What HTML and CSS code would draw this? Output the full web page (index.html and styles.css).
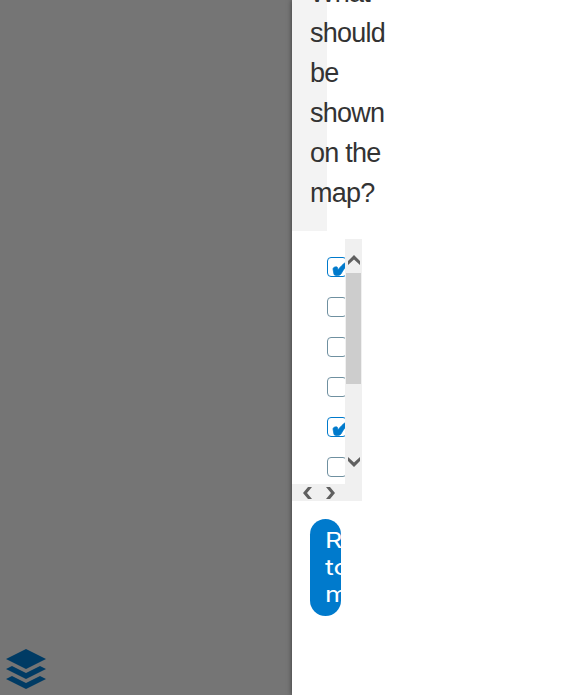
FILE: index.html
```html
<!DOCTYPE html>
<html lang="en">
<head>
<meta charset="utf-8">
<title>Map layers</title>
<link rel="stylesheet" href="styles.css">
</head>
<body>
<div class="screen">
  <div class="backdrop">
    <svg class="layers" width="40" height="40" viewBox="0 0 40 40"><path d="M20 0L40 10L20 20L0 10ZM0 20L6 17L20 24L34 17L40 20L20 30ZM0 30L6 27L20 34L34 27L40 30L20 40Z"/></svg>
  </div>
  <aside class="panel">
    <h2 class="heading">What should be shown on&nbsp;the map?</h2>
    <div class="scroller">
      <div class="options">
        <span class="box checked"><svg class="tick" width="18" height="14" viewBox="0 0 18 14"><path d="M0 6C0 4 4 3 4.500 4.500L5 7C7 4 10 1 13 -1H17C13 3 10 7 8 11C6.500 13 2 13 1 11.500Z"/></svg></span>
        <span class="box"></span>
        <span class="box"></span>
        <span class="box"></span>
        <span class="box checked"><svg class="tick" width="18" height="14" viewBox="0 0 18 14"><path d="M0 6C0 4 4 3 4.500 4.500L5 7C7 4 10 1 13 -1H17C13 3 10 7 8 11C6.500 13 2 13 1 11.500Z"/></svg></span>
        <span class="box"></span>
      </div>
      <div class="vbar">
        <svg class="up" width="12" height="10" viewBox="0 0 12 10"><path d="M0 6L6 0L12 6V10L6 4.500L0 10Z"/></svg>
        <div class="thumb"></div>
        <svg class="down" width="12" height="10" viewBox="0 0 12 10"><path d="M0 0L6 5.500L12 0V4L6 10L0 4Z"/></svg>
      </div>
      <div class="hbar">
        <svg width="10" height="12" viewBox="0 0 10 12"><path d="M5 0H9L4 6L9 12H5L0 6Z"/></svg>
        <svg width="10" height="12" viewBox="0 0 10 12"><path d="M0 0H4L9 6L4 12H0L5 6Z"/></svg>
      </div>
    </div>
    <button class="return"><span class="label">Return to map</span></button>
  </aside>
</div>
</body>
</html>
```
FILE: styles.css
```css
body { margin: 0; background: #fff; }
.screen { display: flex; height: 695px; overflow: hidden; }
.backdrop {
  width: 292px;
  box-sizing: border-box;
  padding: 0 0 6px 6px;
  display: flex;
  align-items: flex-end;
  background: #757575;
}
.layers { fill: #003b64; display: block; }
.panel {
  width: 292px;
  background: #fff;
  box-shadow: 0 0 5px rgba(0, 0, 0, .5);
}
.heading {
  width: 35px;
  height: 276px;
  margin: -45px 0 8px;
  padding: 18px 0 18px 18px;
  box-sizing: border-box;
  background: #f3f3f3;
  color: #333;
  font: 400 27px/40px "Liberation Sans", Arial, sans-serif;
  letter-spacing: -.75px;
}
.scroller {
  width: 70px;
  height: 262px;
  display: grid;
  grid-template: 245px 17px / 53px 17px;
}
.options {
  overflow: hidden;
  padding: 18px 0 0 35px;
  display: flex;
  flex-direction: column;
  gap: 20px;
}
.box {
  width: 20px;
  height: 20px;
  flex: none;
  box-sizing: border-box;
  border: 1px solid #6f90a0;
  border-radius: 4px;
}
.checked { border-color: #007acc; }
.tick { display: block; margin: 5px 0 0 5px; fill: #007acc; stroke: #007acc; stroke-width: .7; overflow: visible; }
.vbar {
  background: #f0f0f0;
  display: flex;
  flex-direction: column;
  align-items: center;
}
.vbar svg, .hbar svg { display: block; fill: #606060; flex: none; }
.vbar .up { margin: 16px 0 8px; }
.thumb { width: 15px; height: 111px; background: #cdcdcd; }
.vbar .down { margin-top: 73px; }
.hbar {
  grid-column: 1 / 3;
  background: #f0f0f0;
  display: flex;
  align-items: center;
  gap: 13px;
  padding-left: 11px;
}
.return {
  display: block;
  width: 31px;
  height: 97px;
  margin: 18px 0 0 18px;
  padding: 0 0 0 15px;
  border: 0;
  border-radius: 16px;
  overflow: hidden;
  background: #007acc;
  color: #fff;
  text-align: left;
  font: 400 21.5px/27px Inter, sans-serif;
}
.label {
  display: block;
  transform: scaleX(1.25);
  transform-origin: left;
}
```
